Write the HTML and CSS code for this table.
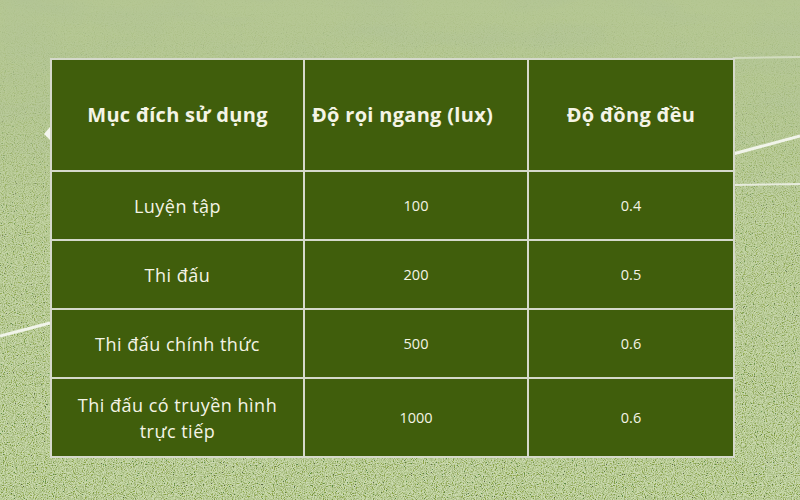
FILE: index.html
```html
<!DOCTYPE html>
<html lang="vi">
<head>
<meta charset="utf-8">
<title>Độ rọi sân bóng</title>
<link rel="stylesheet" href="styles.css">
</head>
<body>
<div class="page">
  <svg class="field" width="800" height="500" viewBox="0 0 800 500" aria-hidden="true">
    <defs>
      <linearGradient id="base" x1="0" y1="0" x2="0" y2="1">
        <stop offset="0" stop-color="#b4c692"/>
        <stop offset="0.3" stop-color="#adc18a"/>
        <stop offset="1" stop-color="#a2b97e"/>
      </linearGradient>
      <filter id="grain" x="0" y="0" width="100%" height="100%">
        <feTurbulence type="fractalNoise" baseFrequency="0.9" numOctaves="2" seed="4" result="n"/>
        <feColorMatrix in="n" type="matrix" values="2.4 0 0 0 -0.55  2.4 0 0 0 -0.45  2.4 0 0 0 -0.75  0 0 0 0 0.75"/>
      </filter>
      <filter id="blotch" x="0" y="0" width="100%" height="100%">
        <feTurbulence type="fractalNoise" baseFrequency="0.012 0.04" numOctaves="2" seed="9" result="b"/>
        <feColorMatrix in="b" type="matrix" values="0 0 0 0 0.42  0 0 0 0 0.52  0 0 0 0 0.32  0 0 0 -2.2 1.25"/>
      </filter>
      <linearGradient id="fade" x1="0" y1="0" x2="0" y2="1">
        <stop offset="0" stop-color="#fff" stop-opacity="0.05"/>
        <stop offset="0.2" stop-color="#fff" stop-opacity="0.25"/>
        <stop offset="0.45" stop-color="#fff" stop-opacity="0.7"/>
        <stop offset="1" stop-color="#fff" stop-opacity="1"/>
      </linearGradient>
      <mask id="m"><rect width="800" height="500" fill="url(#fade)"/></mask>
    </defs>
    <rect width="800" height="500" fill="url(#base)"/>
    <rect width="800" height="500" filter="url(#blotch)" opacity="0.35"/>
    <rect width="800" height="500" filter="url(#grain)" mask="url(#m)" opacity="0.6"/>
    <path d="M733 58 L800 57" stroke="#dfe6d2" stroke-width="2" opacity="0.7"/>
    <path d="M733 154 L800 136" stroke="#f1f4ea" stroke-width="3"/>
    <path d="M733 185 L800 184" stroke="#e7ecdd" stroke-width="2"/>
    <path d="M0 336 L50 323" stroke="#f1f4ea" stroke-width="3"/>
    <path d="M50 127 L44 134 L50 140 Z" fill="#f3f5ee"/>
  </svg>

  <table class="lux">
    <colgroup>
      <col class="c1"><col class="c2"><col class="c3">
    </colgroup>
    <thead>
      <tr class="head">
        <th>Mục đích sử dụng</th>
        <th class="left">Độ rọi ngang (lux)</th>
        <th>Độ đồng đều</th>
      </tr>
    </thead>
    <tbody>
      <tr class="row">
        <td class="name">Luyện tập</td>
        <td class="num">100</td>
        <td class="num">0.4</td>
      </tr>
      <tr class="row">
        <td class="name">Thi đấu</td>
        <td class="num">200</td>
        <td class="num">0.5</td>
      </tr>
      <tr class="row">
        <td class="name">Thi đấu chính thức</td>
        <td class="num">500</td>
        <td class="num">0.6</td>
      </tr>
      <tr class="row last">
        <td class="name">Thi đấu có truyền hình trực tiếp</td>
        <td class="num">1000</td>
        <td class="num">0.6</td>
      </tr>
    </tbody>
  </table>
</div>
</body>
</html>
```

FILE: styles.css
```css
html, body {
  margin: 0;
  padding: 0;
}

body {
  font-family: "Open Sans", "Noto Sans", "DejaVu Sans", sans-serif;
  color: #f4f4e6;
}

.page {
  position: relative;
  width: 800px;
  height: 500px;
  overflow: hidden;
  padding-top: 58px;
  box-sizing: border-box;
}

.field {
  position: absolute;
  left: 0;
  top: 0;
  z-index: 0;
}

.lux {
  position: relative;
  z-index: 1;
  margin-left: 50px;
  width: 683px;
  table-layout: fixed;
  border-collapse: collapse;
  border: 2px solid #d5d9cb;
}

.c1 { width: 253px; }
.c2 { width: 224px; }
.c3 { width: 206px; }

.lux th,
.lux td {
  background: #405e0c;
  border: 2px solid #d5d9cb;
  text-align: center;
  vertical-align: middle;
  padding: 0 20px;
}

.head {
  height: 112px;
}

.head th {
  font-size: 20px;
  font-weight: 700;
  line-height: 26px;
  letter-spacing: 0.3px;
}

.head th.left {
  text-align: left;
  padding-left: 7px;
  padding-right: 2px;
}

.row {
  height: 69px;
}

.row.last {
  height: 79px;
}

.name {
  font-size: 18px;
  line-height: 26px;
  letter-spacing: 0.5px;
}

.num {
  font-size: 14.5px;
}
```
